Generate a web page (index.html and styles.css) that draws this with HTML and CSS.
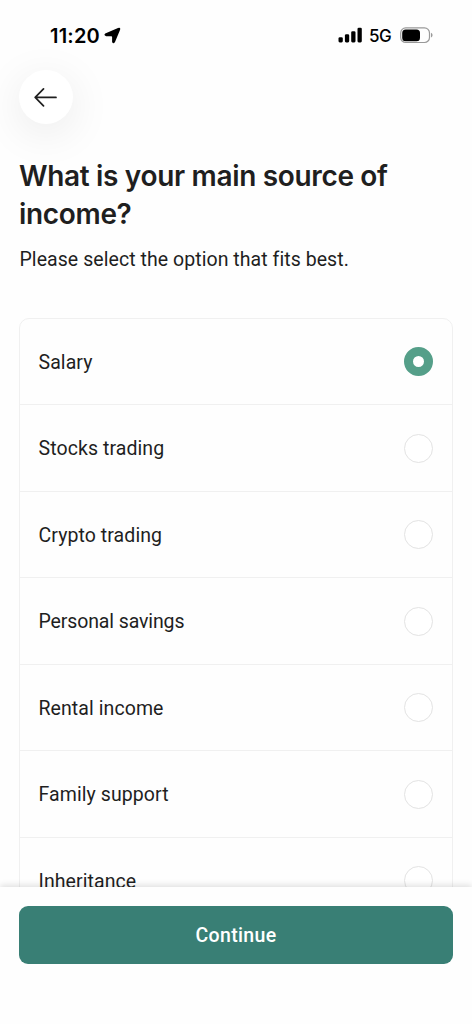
FILE: index.html
```html
<!DOCTYPE html>
<html lang="en">
<head>
<meta charset="utf-8">
<title>Main source of income</title>
<link rel="stylesheet" href="styles.css">
</head>
<body>
<div class="screen">
  <header class="status">
    <span class="time">11:20</span>
    <svg class="location" width="17" height="17" viewBox="0 0 17 17"><path d="M1.2 6.5 14 .9Q17 0 16 2.9L11 15Q9.3 17.4 8.1 15V10Q8.1 9.3 7.3 9.3H2.2Q-.7 8.4 1.2 6.5Z"/></svg>
    <div class="indicators">
      <svg width="25" height="16" viewBox="0 0 25 16"><rect x=".5" y="10.3" width="4.3" height="5.1" rx="1.3"/><rect x="6.9" y="7.3" width="4.3" height="8.1" rx="1.3"/><rect x="13.2" y="4.2" width="4.3" height="11.2" rx="1.3"/><rect x="19.5" y=".7" width="4.3" height="14.7" rx="1.3"/></svg>
      <span class="network">5G</span>
      <svg width="34" height="17" viewBox="0 0 34 17"><rect x=".7" y=".9" width="28.8" height="14.6" rx="5" fill="none" stroke="#999" stroke-width="1.2"/><rect x="2.2" y="2.4" width="17.8" height="11.8" rx="3.5"/><path d="M31 5.8Q32.6 6.5 32.6 8.1T31 10.5Z" fill="#999"/></svg>
    </div>
  </header>
  <main class="content">
    <button class="back" aria-label="Back"><svg width="24" height="20" viewBox="0 0 24 20"><path d="M22 10.4H1.4M9.5 1.9 1.2 10.4 9.5 18.9"/></svg></button>
    <h1 class="title">What is your main source of<br>income?</h1>
    <p class="subtitle">Please select the option that fits best.</p>
    <div class="options">
      <label class="option"><span>Salary</span><i class="radio selected"></i></label>
      <label class="option"><span>Stocks trading</span><i class="radio"></i></label>
      <label class="option"><span>Crypto trading</span><i class="radio"></i></label>
      <label class="option"><span class="tight">Personal savings</span><i class="radio"></i></label>
      <label class="option"><span>Rental income</span><i class="radio"></i></label>
      <label class="option"><span>Family support</span><i class="radio"></i></label>
      <label class="option"><span>Inheritance</span><i class="radio"></i></label>
    </div>
  </main>
  <footer class="footer"><button class="continue">Continue</button></footer>
</div>
</body>
</html>
```
FILE: styles.css
```css
* { box-sizing: border-box; }
body { margin: 0; background: #fefefe; color: #1f1f1f; font-family: Roboto, sans-serif; }
button { border: 0; padding: 0; font-family: inherit; }
.screen { height: 1024px; display: flex; flex-direction: column; overflow: hidden; }
.status { height: 70px; flex: none; display: flex; align-items: center; padding: 0 38px 0 50px; color: #000; font-family: Inter, sans-serif; }
.time { font-size: 20px; font-weight: 600; letter-spacing: .2px; width: 54px; line-height: 24px; padding-top: 1px; }
.location { display: block; }
.indicators { display: flex; align-items: center; margin-left: auto; }
.network { font-size: 17px; font-weight: 500; letter-spacing: -.4px; width: 37px; padding: 1px 0 0 6px; }
.content { flex: 1; min-height: 0; padding: 0 19px; }
.back { width: 54px; height: 54px; border-radius: 50%; background: #fff; box-shadow: 0 9px 44px rgba(0, 0, 0, .085); display: flex; align-items: center; justify-content: center; }
.back path { fill: none; stroke: #1f1f1f; stroke-width: 1.7; stroke-linecap: round; stroke-linejoin: round; }
.title { margin: 33px 0 0; font: 600 28px/38px Inter, sans-serif; letter-spacing: -.33px; white-space: nowrap; }
.subtitle { margin: 13px 0 0 .5px; font-size: 19.5px; line-height: 28px; letter-spacing: .06px; white-space: nowrap; }
.options { margin-top: 44px; border: 1px solid #f0f0f0; border-radius: 10px 10px 0 0; }
.option { height: 86.5px; display: flex; align-items: center; justify-content: space-between; padding: .6px 18.6px 0 18px; border-bottom: 1px solid #f0f0f0; font-size: 19.5px; line-height: 28px; letter-spacing: .08px; }
.option:first-child { height: 86px; padding-top: 0; }
.option span { padding: 2.6px 0 0 .5px; }
.option .tight { letter-spacing: -.12px; }
.radio { width: 29px; height: 29px; border-radius: 50%; border: 1px solid #e3e3e3; background: #fff; }
.selected { border: 9.5px solid #559f89; }
.footer { position: relative; height: 137px; flex: none; background: #fefefe; padding: 19px 19px 0; box-shadow: 0 -2px 6px rgba(0, 0, 0, .12); }
.continue { width: 100%; height: 58px; border-radius: 9px; background: #397f75; color: #fff; font-size: 19.5px; font-weight: 500; letter-spacing: .35px; padding-top: 1px; }
```
